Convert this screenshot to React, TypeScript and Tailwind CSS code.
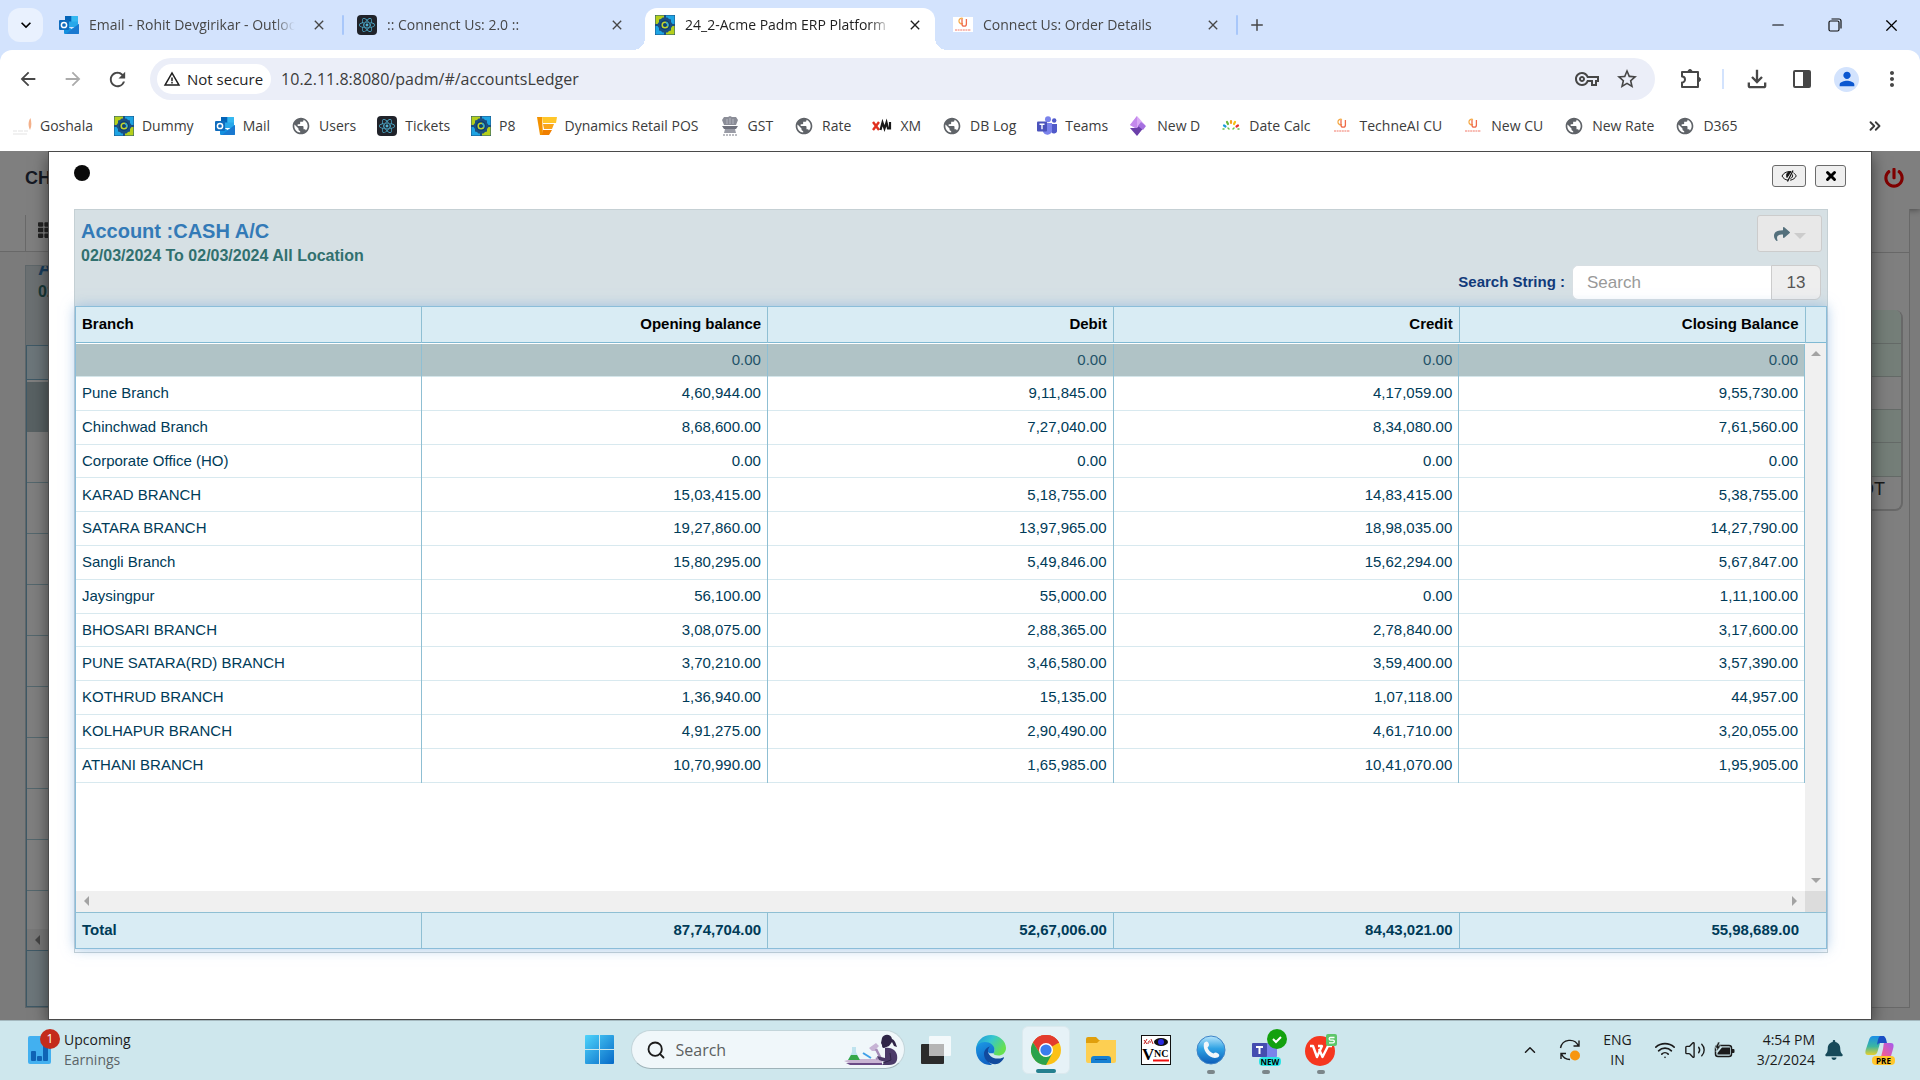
import React from 'react'
import { FaBell, FaPowerOff, FaReact, FaShare, FaTh } from 'react-icons/fa'
import {
  MdArrowBack,
  MdArrowForward,
  MdClose,
  MdKeyboardArrowDown,
  MdMoreVert,
  MdOutlineFileDownload,
  MdOutlineStarBorder,
  MdOutlineVpnKey,
  MdPerson,
  MdPublic,
  MdRefresh,
  MdWarningAmber
} from 'react-icons/md'
import { ChevronUp, ChevronsRight, Minus, Plus, Search, Volume2, Wifi, X } from 'lucide-react'

interface LedgerRow {
  branch: string
  opening: string
  debit: string
  credit: string
  closing: string
}

interface IconItem {
  title: string
  icon: React.ReactNode
}

const rows: LedgerRow[] = [
  { branch: '', opening: '0.00', debit: '0.00', credit: '0.00', closing: '0.00' },
  { branch: 'Pune Branch', opening: '4,60,944.00', debit: '9,11,845.00', credit: '4,17,059.00', closing: '9,55,730.00' },
  { branch: 'Chinchwad Branch', opening: '8,68,600.00', debit: '7,27,040.00', credit: '8,34,080.00', closing: '7,61,560.00' },
  { branch: 'Corporate Office (HO)', opening: '0.00', debit: '0.00', credit: '0.00', closing: '0.00' },
  { branch: 'KARAD BRANCH', opening: '15,03,415.00', debit: '5,18,755.00', credit: '14,83,415.00', closing: '5,38,755.00' },
  { branch: 'SATARA BRANCH', opening: '19,27,860.00', debit: '13,97,965.00', credit: '18,98,035.00', closing: '14,27,790.00' },
  { branch: 'Sangli Branch', opening: '15,80,295.00', debit: '5,49,846.00', credit: '15,62,294.00', closing: '5,67,847.00' },
  { branch: 'Jaysingpur', opening: '56,100.00', debit: '55,000.00', credit: '0.00', closing: '1,11,100.00' },
  { branch: 'BHOSARI BRANCH', opening: '3,08,075.00', debit: '2,88,365.00', credit: '2,78,840.00', closing: '3,17,600.00' },
  { branch: 'PUNE SATARA(RD) BRANCH', opening: '3,70,210.00', debit: '3,46,580.00', credit: '3,59,400.00', closing: '3,57,390.00' },
  { branch: 'KOTHRUD BRANCH', opening: '1,36,940.00', debit: '15,135.00', credit: '1,07,118.00', closing: '44,957.00' },
  { branch: 'KOLHAPUR BRANCH', opening: '4,91,275.00', debit: '2,90,490.00', credit: '4,61,710.00', closing: '3,20,055.00' },
  { branch: 'ATHANI BRANCH', opening: '10,70,990.00', debit: '1,65,985.00', credit: '10,41,070.00', closing: '1,95,905.00' }
]

/* ---------- favicons ---------- */

const OutlookIcon = () => (
  <svg viewBox="0 0 20 20" className="w-5 h-5">
    <rect x="6" y="1" width="13" height="11" rx="1" fill="#28a8ea" />
    <path d="M6 1h6.500v5.500H6z" fill="#0364b8" />
    <path d="M12.500 1H18a1 1 0 0 1 1 1v4.500h-6.500z" fill="#35b8f1" />
    <path d="M5 9l7.500 5L20 9v9a1 1 0 0 1-1 1H6a1 1 0 0 1-1-1z" fill="#1490df" />
    <path d="M20 9v9a1 1 0 0 1-1 1H7z" fill="#1a79d0" />
    <rect x="0" y="5" width="10" height="10" rx="1" fill="#0f6cbd" />
    <circle cx="5" cy="10" r="2.600" fill="none" stroke="#fff" strokeWidth="1.500" />
  </svg>
)

const ReactTile = () => (
  <span className="w-5 h-5 rounded-sm bg-[#20232a] flex items-center justify-center">
    <FaReact className="w-4 h-4 text-[#4fb3d4]" />
  </span>
)

const PadmIcon = () => (
  <svg viewBox="0 0 20 20" className="w-5 h-5">
    <rect width="20" height="20" fill="#1b4f80" />
    <path d="M.500 .5H9v2H7.500L6 4 4 4.500V7L2.500 9h-2z" fill="#b5cf1b" />
    <path d="M11 .5h8.500V9h-2L16 7V4.500L14 4l-1.500-1.500H11z" fill="#1ea4e3" />
    <path d="M.500 11h2L4 13v2.500l2 .5 1.500 1.500H9v2H.5z" fill="#1ea4e3" />
    <path d="M19.500 11h-2L16 13v2.500l-2 .5-1.500 1.500H11v2h8.500z" fill="#b5cf1b" />
    <circle cx="10" cy="10" r="5" fill="#0d3f74" />
    <circle cx="10" cy="10" r="2.800" fill="#0d3f74" stroke="#c3d52b" strokeWidth="1.500" />
    <path d="M11 7.400a2.800 2.800 0 0 1 1.500 4" stroke="#29abe2" strokeWidth="1.500" fill="none" />
  </svg>
)

const ConnectUsIcon = () => (
  <svg viewBox="0 0 20 20" className="w-5 h-5">
    <rect y="2" width="20" height="15" fill="#fff" />
    <path d="M10 3.500a2.800 2.800 0 1 0 0 5" fill="none" stroke="#f5a742" strokeWidth="1.200" />
    <path d="M9 4v5a2.200 2.200 0 0 0 4.400 0V4" fill="none" stroke="#ef6a4a" strokeWidth="1.300" />
    <path d="M2 15h16" stroke="#f6a59a" strokeWidth="1.500" strokeDasharray="2 .6" />
  </svg>
)

const GoshalaIcon = () => (
  <svg viewBox="0 0 20 20" className="w-5 h-5">
    <path d="M18.500 2c-3 4-2 9-.5 12 2-4 1.500-8 .5-12z" fill="#f3b08a" />
    <path d="M1 15h4m1 0h5m1 0h4M1 18h14" stroke="#f1f1f1" strokeWidth="2" />
  </svg>
)

const DynamicsIcon = () => (
  <svg viewBox="0 0 20 20" className="w-5 h-5">
    <path d="M0 1h5l1 18H3z" fill="#f39200" />
    <path d="M5 1h15l-1 6H6z" fill="#ffc629" />
    <path d="M6 8h11l-2 5H7z" fill="#f9a51a" />
    <path d="M6 14h9l-3 5H5z" fill="#f07f00" />
  </svg>
)

const EmblemIcon = () => (
  <svg viewBox="0 0 20 20" className="w-5 h-5">
    <path d="M4 1h4l2-1 2 1h4l2 3-2 5H4L2 4z" fill="#8b8d97" />
    <path d="M7 3v5M10 2v6M13 3v5" stroke="#b4b6c0" />
    <path d="M2 10h16l-2 3H4z" fill="#6f717c" />
    <path d="M5 13h10l1 4H4z" fill="#9a9ca6" />
    <path d="M3 19h14" stroke="#a5a7ae" strokeWidth="1.500" strokeDasharray="2 1" />
  </svg>
)

const GlobeIcon = () => <MdPublic className="w-5 h-5 text-[#5f6368]" />

const XmIcon = () => (
  <svg viewBox="0 0 20 20" className="w-5 h-5">
    <path d="M1 6l6 8M7 6l-6 8" stroke="#e0301e" strokeWidth="2.400" />
    <path d="M8.500 14l2-7.500 2 6 2-6 1.500 6h2V6" stroke="#1a1a1a" strokeWidth="2.200" fill="none" />
  </svg>
)

const TeamsIcon = () => (
  <svg viewBox="0 0 20 20" className="w-5 h-5">
    <circle cx="11" cy="3.200" r="3" fill="#7b83eb" />
    <circle cx="17.200" cy="4.500" r="2.200" fill="#5059c9" />
    <path d="M14 8h6v6a3 3 0 0 1-6 1z" fill="#5059c9" />
    <path d="M6 7h9v8a4.800 4.800 0 0 1-9 1z" fill="#7b83eb" />
    <rect y="5.500" width="10" height="10" rx="1" fill="#4b53bc" />
    <path d="M2.500 8.200h5M5 8.200v5" stroke="#fff" strokeWidth="1.400" />
  </svg>
)

const DiamondIcon = () => (
  <svg viewBox="0 0 20 20" className="w-5 h-5">
    <path d="M8 0l8 9-8 4-7-4z" fill="#d8a8f5" />
    <path d="M1 9l7-9v13z" fill="#c389ec" />
    <path d="M1 12l7 8 8-10-4-3-4 5z" fill="#6b3fa9" />
    <path d="M12 6l5 4-3 4-5-4z" fill="#a56fe0" />
  </svg>
)

const SparkIcon = () => (
  <svg viewBox="0 0 20 20" className="w-5 h-5" strokeWidth="2.200" strokeLinecap="round">
    <path d="M10 5v2" stroke="#f4a020" />
    <path d="M6 6l1 2" stroke="#69b539" />
    <path d="M14 6l-1 2" stroke="#f5c211" />
    <path d="M3 9.500l1.500 1" stroke="#1b9dd9" />
    <path d="M17 9.500l-1.500 1" stroke="#e5322d" />
    <path d="M2 13h1M7 12l1 1M12 13l1-1M17 13h1" stroke="#6ac04a" strokeWidth="1.500" />
  </svg>
)

const tabs = [
  { title: 'Email - Rohit Devgirikar - Outlook', icon: <OutlookIcon />, active: false, divider: true },
  { title: ':: Connenct Us: 2.0 ::', icon: <ReactTile />, active: false, divider: false },
  { title: '24_2-Acme Padm ERP Platform', icon: <PadmIcon />, active: true, divider: false },
  { title: 'Connect Us: Order Details', icon: <ConnectUsIcon />, active: false, divider: true }
]

const bookmarks: IconItem[] = [
  { title: 'Goshala', icon: <GoshalaIcon /> },
  { title: 'Dummy', icon: <PadmIcon /> },
  { title: 'Mail', icon: <OutlookIcon /> },
  { title: 'Users', icon: <GlobeIcon /> },
  { title: 'Tickets', icon: <ReactTile /> },
  { title: 'P8', icon: <PadmIcon /> },
  { title: 'Dynamics Retail POS', icon: <DynamicsIcon /> },
  { title: 'GST', icon: <EmblemIcon /> },
  { title: 'Rate', icon: <GlobeIcon /> },
  { title: 'XM', icon: <XmIcon /> },
  { title: 'DB Log', icon: <GlobeIcon /> },
  { title: 'Teams', icon: <TeamsIcon /> },
  { title: 'New D', icon: <DiamondIcon /> },
  { title: 'Date Calc', icon: <SparkIcon /> },
  { title: 'TechneAI CU', icon: <ConnectUsIcon /> },
  { title: 'New CU', icon: <ConnectUsIcon /> },
  { title: 'New Rate', icon: <GlobeIcon /> },
  { title: 'D365', icon: <GlobeIcon /> }
]

/* ---------- browser chrome ---------- */

function TabStrip() {
  return (
    <div className="h-[50px] bg-[#d3e3fd] flex items-center">
      <button aria-label="Search tabs" className="ml-2 w-[35px] h-[34px] rounded-xl bg-[#e9f1fe] flex items-center justify-center">
        <MdKeyboardArrowDown className="w-5 h-5 text-black" />
      </button>
      <div className="ml-1.5 flex self-stretch pt-2">
        {tabs.map((tab) => (
          <React.Fragment key={tab.title}>
            <div
              className={
                tab.active
                  ? 'relative w-[290px] bg-white rounded-t-xl flex items-center px-2.5 pb-2 gap-2.5 text-[#1f1f1f]'
                  : 'relative w-[290px] flex items-center px-2.5 pb-2 gap-2.5 text-[#474747]'
              }
            >
              {tab.active && (
                <>
                  <span className="absolute bottom-0 -left-3 w-3 h-3 bg-[radial-gradient(circle_at_0_0,#d3e3fd_12px,#ffffff_12px)]" />
                  <span className="absolute bottom-0 -right-3 w-3 h-3 bg-[radial-gradient(circle_at_100%_0,#d3e3fd_12px,#ffffff_12px)]" />
                </>
              )}
              <span className="shrink-0">{tab.icon}</span>
              <span className="flex-1 overflow-hidden whitespace-nowrap text-sm [mask-image:linear-gradient(to_right,black_88%,transparent_98%)]">
                {tab.title}
              </span>
              <button aria-label={`Close ${tab.title}`} className="w-5 h-5 flex items-center justify-center">
                <MdClose className="w-4 h-4" />
              </button>
            </div>
            <div className="w-2 flex items-center justify-center pb-2">
              {tab.divider && <span className="w-0.5 h-5 rounded bg-[#a8c7fa]" />}
            </div>
          </React.Fragment>
        ))}
        <button aria-label="New tab" className="w-8 flex items-center justify-center pb-2">
          <Plus className="w-[18px] h-[18px] text-[#474747]" />
        </button>
      </div>
      <div className="ml-auto flex self-stretch">
        <button aria-label="Minimize" className="w-[57px] flex items-center justify-center">
          <Minus className="w-[18px] h-[18px]" strokeWidth={1.5} />
        </button>
        <button aria-label="Restore" className="w-[57px] flex items-center justify-center">
          <svg viewBox="0 0 14 14" className="w-3.5 h-3.5" fill="none" stroke="#111" strokeWidth="1.200">
            <rect x="1" y="3" width="10" height="10" rx="1.500" />
            <path d="M3.500 1H11a2 2 0 0 1 2 2v7.500" />
          </svg>
        </button>
        <button aria-label="Close window" className="w-[57px] flex items-center justify-center">
          <X className="w-[19px] h-[19px]" strokeWidth={1.5} />
        </button>
      </div>
    </div>
  )
}

function AddressBar() {
  return (
    <div className="h-[58px] flex items-center pl-[5px] pr-1.5 text-[#474747]">
      <button aria-label="Back" className="w-[45px] flex justify-center"><MdArrowBack className="w-[22px] h-[22px]" /></button>
      <button aria-label="Forward" className="w-[45px] flex justify-center text-[#ababab]"><MdArrowForward className="w-[22px] h-[22px]" /></button>
      <button aria-label="Reload" className="w-[45px] flex justify-center"><MdRefresh className="w-[23px] h-[23px]" /></button>
      <div className="ml-2.5 flex-1 h-[42px] rounded-full bg-[#ebeef8] flex items-center pl-[7px] pr-4">
        <button className="h-[30px] rounded-full bg-white pl-1.5 pr-2 flex items-center gap-1.5 text-[#1f1f1f] text-[15px] whitespace-nowrap">
          <MdWarningAmber className="w-[18px] h-[18px]" />
          Not secure
        </button>
        <input
          aria-label="Address"
          defaultValue="10.2.11.8:8080/padm/#/accountsLedger"
          className="flex-1 min-w-0 ml-2.5 bg-transparent outline-none text-base text-[#3c3c3c]"
        />
        <button aria-label="Passwords" className="w-10 flex justify-center"><MdOutlineVpnKey className="w-6 h-6" /></button>
        <button aria-label="Bookmark this page" className="ml-2 w-6 flex justify-center"><MdOutlineStarBorder className="w-6 h-6" /></button>
      </div>
      <button aria-label="Extensions" className="ml-3 w-[45px] flex justify-center">
        <svg viewBox="0 0 24 24" className="w-6 h-6" fill="none" stroke="#474747" strokeWidth="2" strokeLinejoin="round">
          <path d="M4 5h16v15H4v-4.500a3 3 0 0 0 0-6z" />
          <path d="M10 4.500a2 2 0 0 1 4 0zM20.500 10.500a2 2 0 0 1 0 4z" fill="#474747" strokeWidth="1" />
        </svg>
      </button>
      <span className="mx-2.5 w-0.5 h-5 bg-[#d3e3fd]" />
      <button aria-label="Downloads" className="w-[45px] flex justify-center"><MdOutlineFileDownload className="w-7 h-7" /></button>
      <button aria-label="Side panel" className="w-[45px] flex justify-center">
        <svg viewBox="0 0 20 20" className="w-5 h-5">
          <rect x="2" y="2" width="16" height="16" rx="1" fill="none" stroke="#474747" strokeWidth="2" />
          <path d="M11 2h7v16h-7z" fill="#474747" />
        </svg>
      </button>
      <button aria-label="Profile" className="w-[45px] flex justify-center">
        <span className="w-[25px] h-[25px] rounded-full bg-[#d3e3fd] flex items-center justify-center">
          <MdPerson className="w-[22px] h-[22px] text-[#0b57d0]" />
        </span>
      </button>
      <button aria-label="Menu" className="w-[45px] flex justify-center"><MdMoreVert className="w-6 h-6" /></button>
    </div>
  )
}

function BookmarksBar() {
  return (
    <nav className="h-9 mb-[7px] flex items-center pl-3 pr-9 text-sm text-[#3c3c3c]">
      <div className="flex items-center gap-[21px]">
        {bookmarks.map((item) => (
          <a key={item.title} href="#" className="flex items-center gap-2 whitespace-nowrap">
            {item.icon}
            {item.title}
          </a>
        ))}
      </div>
      <button aria-label="More bookmarks" className="ml-auto"><ChevronsRight className="w-[18px] h-[18px]" strokeWidth={2.5} /></button>
    </nav>
  )
}

/* ---------- page behind the dialog ---------- */

function BackgroundPage() {
  return (
    <div className="h-full flex flex-col bg-[#f6f6f6]" aria-hidden="true">
      <div className="h-[58px] shrink-0 bg-white shadow-[0_1px_6px_rgba(0,0,0,0.4)] flex items-center justify-between pl-[25px] pr-4 pb-1">
        <span className="text-lg font-bold text-[#2b3245]">CH</span>
        <FaPowerOff className="w-5 h-5 text-[#ff0000]" />
      </div>
      <div className="flex-1 min-h-0 flex justify-between pb-3">
        <div className="w-[400px] flex flex-col">
          <div className="h-[43px] shrink-0 border-b border-[#d0d0d0] bg-white pt-1.5 pl-[25px]">
            <div className="h-full border-l border-[#d0d0d0] flex items-center pl-3 pb-1.5">
              <FaTh className="w-[18px] h-[18px] text-[#444444]" />
            </div>
          </div>
          <div className="mt-[13px] ml-[25px] flex-1 flex flex-col border border-[#bccdd3] bg-white">
            <div className="h-[79px] shrink-0 overflow-hidden bg-[#d6e0e4] pl-3">
              <p className="-mt-2.5 text-xl leading-6 font-bold text-[#337ab7]">A</p>
              <p className="text-base leading-6 font-bold text-[#31706f]">02</p>
            </div>
            <div className="flex-1 flex flex-col border border-[#7fb2cc]">
              <div className="h-[34px] bg-[#d9ecf4] border-b border-[#7fb2cc]" />
              <div className="mt-0.5 h-[50px] bg-[#b0c3c6]" />
              <div className="flex-1 min-h-0 overflow-hidden">
                {rows.slice(1, 10).map((row) => (
                  <div key={row.branch} className="h-[51px] border-b border-[#a9cfda]" />
                ))}
              </div>
              <div className="h-[21px] flex items-center bg-[#f0f0f0] pl-2">
                <span className="border-y-[5px] border-y-transparent border-r-[5px] border-r-[#888888]" />
                <span className="ml-2 w-20 h-full bg-[#c1c1c1]" />
              </div>
              <div className="h-[56px] bg-[#d9ecf4] border-t border-[#7fb2cc]" />
            </div>
          </div>
        </div>
        <div className="mr-2.5 w-[300px] border-r border-b border-[#d0d0d0] bg-white">
          <div className="h-11 border-b border-[#d0d0d0]" />
          <div className="mt-[57px] mr-1.5 rounded-lg border-r-2 border-b-2 border-[#d0d0d0] overflow-hidden">
            <div className="h-[34px] bg-[#e8fcf1] border-b border-[#c8d4ce]" />
            <div className="h-[33px] bg-[#e8fcf1] border-b border-[#c8d4ce]" />
            <div className="h-[33px] border-b border-[#c8d4ce]" />
            <div className="h-[33px] bg-[#e8fcf1] border-b border-[#c8d4ce]" />
            <div className="h-[34px] bg-[#e8fcf1] border-b border-[#c8d4ce]" />
            <div className="h-[32px] pr-4 text-right text-lg leading-6 text-[#333333]">DT</div>
          </div>
        </div>
      </div>
    </div>
  )
}

/* ---------- ledger dialog ---------- */

function LedgerTable() {
  return (
    <div className="relative flex-1 min-h-0 flex flex-col bg-white border border-[#8bbdd9] mb-[3px] text-[15px] text-[#003b58] shadow-[0_0_12px_rgba(120,170,220,0.6)]">
      <table className="w-full table-fixed bg-[#d9ecf4] text-black">
        <colgroup>
          <col /><col /><col /><col /><col /><col className="w-[21px]" />
        </colgroup>
        <thead>
          <tr className="h-[35px] border-b border-[#7fb9d3]">
            <th className="px-1.5 text-left border-r border-[#8fbfd3]">Branch</th>
            <th className="px-1.5 text-right border-r border-[#8fbfd3]">Opening balance</th>
            <th className="px-1.5 text-right border-r border-[#8fbfd3]">Debit</th>
            <th className="px-1.5 text-right border-r border-[#8fbfd3]">Credit</th>
            <th className="px-1.5 text-right border-r border-[#8fbfd3]">Closing Balance</th>
            <td />
          </tr>
        </thead>
      </table>

      <div className="flex-1 min-h-0 flex">
        <div className="flex-1 overflow-hidden pt-px">
          <table className="w-full h-[439px] table-fixed">
            <tbody>
              {rows.map((row, index) => (
                <tr key={row.branch} className={index === 0 ? 'border-b border-[#d5e6ea] bg-[#b0c3c6] text-[#1f5268]' : 'border-b border-[#d8e9ef]'}>
                  <td className="px-1.5 border-r border-[#8fbfd3]">{row.branch}</td>
                  <td className="px-1.5 text-right border-r border-[#8fbfd3]">{row.opening}</td>
                  <td className="px-1.5 text-right border-r border-[#8fbfd3]">{row.debit}</td>
                  <td className="px-1.5 text-right border-r border-[#8fbfd3]">{row.credit}</td>
                  <td className="px-1.5 text-right border-r border-[#8fbfd3]">{row.closing}</td>
                </tr>
              ))}
            </tbody>
          </table>
        </div>
        {/* vertical scrollbar */}
        <div className="w-[21px] bg-[#f0f0f0] flex flex-col items-center justify-between py-2">
          <span className="border-x-[5px] border-x-transparent border-b-[5px] border-b-[#a3a3a3]" />
          <span className="border-x-[5px] border-x-transparent border-t-[5px] border-t-[#a3a3a3]" />
        </div>
      </div>

      {/* horizontal scrollbar */}
      <div className="h-[21px] flex">
        <div className="flex-1 bg-[#f0f0f0] flex items-center justify-between px-2">
          <span className="border-y-[5px] border-y-transparent border-r-[5px] border-r-[#a3a3a3]" />
          <span className="border-y-[5px] border-y-transparent border-l-[5px] border-l-[#a3a3a3]" />
        </div>
        <div className="w-[21px] bg-[#dcdcdc]" />
      </div>

      <table className="w-full table-fixed bg-[#d9ecf4]">
        <colgroup>
          <col /><col /><col /><col /><col /><col className="w-[21px]" />
        </colgroup>
        <tbody>
          <tr className="h-9 border-t border-[#8fbfd3] font-bold">
            <td className="px-1.5 border-r border-[#8fbfd3]">Total</td>
            <td className="px-1.5 text-right border-r border-[#8fbfd3]">87,74,704.00</td>
            <td className="px-1.5 text-right border-r border-[#8fbfd3]">52,67,006.00</td>
            <td className="px-1.5 text-right border-r border-[#8fbfd3]">84,43,021.00</td>
            <td className="px-1.5 text-right">55,98,689.00</td>
            <td />
          </tr>
        </tbody>
      </table>
    </div>
  )
}

function LedgerDialog() {
  return (
    <div
      role="dialog"
      aria-label="Cash account ledger"
      className="absolute top-0 bottom-0 left-12 right-12 flex flex-col bg-white border border-[#4a4a4a] pl-[25px] pr-[43px] shadow-[0_5px_15px_rgba(0,0,0,0.5)]"
    >
      <div className="h-[57px] shrink-0 flex items-start justify-between pt-[13px] -mr-[18px]">
        <span className="w-4 h-4 rounded-full bg-[#0a0a0a]" />
        <div className="flex gap-[9px]">
          <button aria-label="Hide" className="w-[34px] h-[22px] rounded-[3px] border border-[#6b6b6b] bg-[#efefef] flex items-center justify-center">
            <svg viewBox="0 0 16 12" className="w-4 h-3" fill="none" stroke="#111" strokeWidth="1">
              <path d="M7 10.200C4 9.900 2 8 1 6c1.500-2.800 4-4.300 7-4.300" />
              <path d="M8 1.700C6 2.500 5 5 6 7.500L10 1.500z" fill="#111" />
              <path d="M12 .5L6.500 11.500" strokeWidth="1.300" />
              <path d="M12.500 2.800C14 3.800 14.800 5 15.200 6c-1 2-3 3.800-6 4.200" />
              <path d="M11.500 4.500c.5 2-.5 3.500-2 4" />
            </svg>
          </button>
          <button aria-label="Close" className="w-[31px] h-[22px] rounded-[3px] border border-[#6b6b6b] bg-[#efefef] flex items-center justify-center">
            <X className="w-3.5 h-3.5 text-black" strokeWidth={5} />
          </button>
        </div>
      </div>

      <div className="flex-1 min-h-0 mb-[66px] flex flex-col border border-[#c5d0d4] bg-[#f7fafc]">
        <div className="h-24 shrink-0 bg-[#d6e0e4] flex justify-between pl-1.5 pr-[5px] pt-[5px]">
          <div className="pt-1">
            <h1 className="text-xl leading-6 font-bold text-[#337ab7]">Account :CASH A/C</h1>
            <p className="text-base leading-[26px] font-bold text-[#31706f]">02/03/2024 To 02/03/2024 All Location</p>
          </div>
          <div className="flex flex-col items-end">
            <button aria-label="Share" className="w-[65px] h-[37px] rounded-[3px] border border-[#cccccc] bg-[#e8e8e8] flex items-center justify-center gap-1">
              <FaShare className="w-4 h-4 text-[#54707c]" />
              <span className="mt-1 border-x-[6px] border-x-transparent border-t-[6px] border-t-[#cccccc]" />
            </button>
            <div className="mt-[13px] mr-px flex items-center">
              <label htmlFor="ledger-search" className="mr-[7px] font-bold text-[15px] text-[#113a7a]">Search String :</label>
              <input
                id="ledger-search"
                type="text"
                placeholder="Search"
                className="w-[199px] h-[35px] rounded-l-md border border-r-0 border-[#d8dfe3] bg-white pl-[14px] text-[17px] outline-none placeholder:text-[#999999]"
              />
              <span className="w-[50px] h-[35px] rounded-r-md border border-[#cccccc] bg-[#eeeeee] flex items-center justify-center text-[17px] text-[#555555]">13</span>
            </div>
          </div>
        </div>
        <LedgerTable />
      </div>
    </div>
  )
}

/* ---------- taskbar ---------- */

const StartIcon = () => (
  <svg viewBox="0 0 29 29" className="w-[29px] h-[29px]">
    <defs>
      <linearGradient id="win" x1="0" y1="0" x2="1" y2="1">
        <stop offset="0" stopColor="#4fd4fb" />
        <stop offset="1" stopColor="#0669c7" />
      </linearGradient>
    </defs>
    <path d="M1 0h13v14H0V1a1 1 0 0 1 1-1zM15 0h13a1 1 0 0 1 1 1v13H15zM0 15h14v14H1a1 1 0 0 1-1-1zM15 15h14v13a1 1 0 0 1-1 1H15z" fill="url(#win)" />
  </svg>
)

const ScientistArt = () => (
  <svg viewBox="0 0 54 31" className="w-[54px] h-[31px]">
    <path d="M0 27l8-2h30v4H5z" fill="#c9b5d3" />
    <path d="M2 29h36v2H6z" fill="#6a4a86" />
    <path d="M8 13h4v5l4 8H4l4-8z" fill="#bfe3ee" />
    <path d="M7 21h6l3 5H4z" fill="#36a84a" />
    <path d="M19 19l8 5" stroke="#3fa0e8" strokeWidth="2" />
    <path d="M25 14l7-5 3 3-3 3 1 2h-5z" fill="#c7b4d5" />
    <path d="M32 15l4 8-4 2" stroke="#a58cb8" strokeWidth="2.500" fill="none" />
    <path d="M38 4c1-4 9-5 10 1 3 1 4 5 5 8l-3-1-2-4-3 4-5 2c-2 0-2-2-2-3l-1-2z" fill="#2f2547" />
    <path d="M41 14c6-1 11 2 12 7 1 6-1 10-8 10h-7l3-3-6-2-2-4 8 2z" fill="#4a3a68" />
    <path d="M46 19l1 7-8 3" stroke="#2f2547" fill="none" />
  </svg>
)

const TaskViewIcon = () => (
  <svg viewBox="0 0 30 28" className="w-[30px] h-7">
    <rect y="8" width="23" height="20" rx="1" fill="#2b2b2b" />
    <rect x="8" width="22" height="20" rx="1" fill="#ffffff" fillOpacity=".75" />
    <path d="M8 8h15v12H8z" fill="#b5b5b5" />
  </svg>
)

const EdgeIcon = () => (
  <svg viewBox="0 0 30 30" className="w-[30px] h-[30px]">
    <defs>
      <linearGradient id="edgeTop" x1="0" y1="0" x2="1" y2=".5">
        <stop offset="0" stopColor="#1b93dc" />
        <stop offset=".5" stopColor="#36c6cf" />
        <stop offset="1" stopColor="#66e04e" />
      </linearGradient>
      <linearGradient id="edgeBody" x1="0" y1="0" x2=".4" y2="1">
        <stop offset="0" stopColor="#1c9be6" />
        <stop offset="1" stopColor="#0f62c4" />
      </linearGradient>
    </defs>
    <path d="M0 15C0 6 7 0 15 0s15 6 15 13c0 5-4 7.500-7.500 7.500-3 0-5-1-5-2.300 0-.8 1-1 1-3.200 0-2-1.800-4-4-4C8 11 3 14 0 15z" fill="url(#edgeTop)" />
    <path d="M0 15c0-5 4-8 9-8 5 0 9.500 3.500 9.500 8 0 2.200-1 2.500-1 3.200H13c-1-1-1.500-2-1-4-4 3-3 10 4 15.700C7 31 0 24 0 15z" fill="url(#edgeBody)" />
    <path d="M14.500 11.200C11 12 8 15 8 19c0 7 7 11 13 10 3-.8 5.500-3 7-6 .2-.7-.3-.9-.8-.6C19 26 12 21 12 16c0-2 1-4 2.500-4.800z" fill="#114a9e" />
  </svg>
)

const ChromeIcon = () => (
  <svg viewBox="0 0 30 30" className="w-[30px] h-[30px]">
    <circle cx="15" cy="15" r="15" fill="#fbc116" />
    <path d="M15 15L2 7.500A15 15 0 0 1 28 7.500z" fill="#e33b2e" />
    <path d="M15 8h13.200A15 15 0 0 0 2 7.500L9 18.500z" fill="#e33b2e" />
    <path d="M2 7.500A15 15 0 0 0 15 30l6.200-11.500L15 22a7 7 0 0 1-6-3.500z" fill="#2ba24c" />
    <circle cx="15" cy="15" r="7" fill="#fff" />
    <circle cx="15" cy="15" r="5.600" fill="#3b7ded" />
  </svg>
)

const FolderIcon = () => (
  <svg viewBox="0 0 30 26" className="w-[30px] h-[26px]">
    <path d="M0 2a2 2 0 0 1 2-2h8l3 3h15a2 2 0 0 1 2 2v4H0z" fill="#e09f0c" />
    <path d="M0 6h11l3-3h16v21a2 2 0 0 1-2 2H2a2 2 0 0 1-2-2z" fill="#fdcf52" />
    <path d="M5 26v-4a3 3 0 0 1 3-3h14a3 3 0 0 1 3 3v4z" fill="#1680d2" />
    <path d="M9 22.500h12" stroke="#0b55a0" />
  </svg>
)

const VncIcon = () => (
  <svg viewBox="0 0 30 30" className="w-[30px] h-[30px]">
    <rect x=".5" y=".5" width="29" height="29" fill="#fff" stroke="#111" />
    <path d="M3 5l3 4M6 4l-3 5M7 9c0-4 3-4 2-1M10 4l2 5" stroke="#c02020" fill="none" />
    <ellipse cx="20" cy="7" rx="7" ry="4" fill="#111" />
    <circle cx="20" cy="7" r="3" fill="#2a2ae0" />
    <text x="1" y="25" fontFamily="Liberation Serif, serif" fontWeight="700" fontSize="17">V</text>
    <text x="13" y="22" fontFamily="Liberation Serif, serif" fontWeight="700" fontSize="10">NC</text>
    <path d="M12 25.500h16" stroke="#f01010" strokeWidth="2" />
  </svg>
)

const PhoneIcon = () => (
  <svg viewBox="0 0 30 30" className="w-[30px] h-[30px]">
    <defs>
      <linearGradient id="phone" x1="0" y1="0" x2="0" y2="1">
        <stop offset="0" stopColor="#b9e6fb" />
        <stop offset=".45" stopColor="#2fa2e4" />
        <stop offset="1" stopColor="#0c5cb8" />
      </linearGradient>
    </defs>
    <circle cx="15" cy="15" r="14" fill="url(#phone)" stroke="#3d83c8" />
    <path d="M8 8c1.500-2 3.500-2 4.500 0s.5 3-1 4.500c1 3 3 5 6 6 1.500-1.500 2.500-1.500 4.500 0s1.500 3-.5 4C14 25 6 16 8 8z" fill="#f1f6fa" />
  </svg>
)

const TeamsNewIcon = () => (
  <span className="relative w-[30px] h-[30px] flex items-center">
    <svg viewBox="0 0 30 30" className="w-[30px] h-[30px]">
      <rect x="14" y="8" width="12" height="15" rx="2" fill="#7b83eb" />
      <rect x="1" y="8" width="15" height="14" rx="1" fill="#454db0" />
      <path d="M5 12h7M8.500 12v7" stroke="#fff" strokeWidth="2" />
    </svg>
    <span className="absolute -top-1.5 -right-1.5 w-5 h-5 rounded-full bg-[#13a10e] flex items-center justify-center">
      <svg viewBox="0 0 12 12" className="w-3 h-3" fill="none" stroke="#fff" strokeWidth="2">
        <path d="M2 6l3 3 5-5" />
      </svg>
    </span>
    <span className="absolute -bottom-px left-2 h-[9px] px-0.5 rounded-sm bg-[#2be5e5] text-[8px] leading-[9px] font-bold text-black">NEW</span>
  </span>
)

const WpsIcon = () => (
  <svg viewBox="0 0 32 32" className="w-8 h-8">
    <circle cx="15" cy="17" r="15" fill="#f5371f" />
    <path d="M5 12h3l4 11 5-11h-4M14 15l3.500 8L23 12h4" stroke="#fff" strokeWidth="2.400" fill="none" strokeLinejoin="round" />
    <rect x="21" y="0" width="11" height="12" rx="2" fill="#5dc66a" />
    <path d="M29.500 3.500h-4a1.200 1.200 0 0 0 0 2.700h2.500a1.200 1.200 0 0 1 0 2.700h-4" stroke="#fff" fill="none" strokeWidth="1.300" />
  </svg>
)

const taskApps = [
  { title: 'Task view', icon: <TaskViewIcon />, open: false, active: false },
  { title: 'Edge', icon: <EdgeIcon />, open: false, active: false },
  { title: 'Chrome', icon: <ChromeIcon />, open: false, active: true },
  { title: 'File Explorer', icon: <FolderIcon />, open: false, active: false },
  { title: 'VNC Viewer', icon: <VncIcon />, open: false, active: false },
  { title: 'Phone', icon: <PhoneIcon />, open: true, active: false },
  { title: 'Teams', icon: <TeamsNewIcon />, open: true, active: false },
  { title: 'WPS Office', icon: <WpsIcon />, open: true, active: false }
]

function Taskbar() {
  return (
    <footer className="h-[60px] shrink-0 border-t border-[#a5b9bf] bg-[#cee7ed] pb-0.5 grid grid-cols-[1fr_auto_1fr] items-center text-sm text-[#1b1b1b]">
      <button className="flex items-center gap-3 pl-7 text-left leading-5">
        <span className="relative">
          <svg viewBox="0 0 24 28" className="w-6 h-7">
            <rect width="23" height="28" rx="2" fill="#42b0f0" />
            <rect x="3" y="15" width="5" height="10" rx="1" fill="#0f63b5" />
            <rect x="9" y="20" width="5" height="5" rx="1" fill="#0f63b5" />
            <rect x="15" y="9" width="5" height="16" rx="1" fill="#0f63b5" />
          </svg>
          <span className="absolute -top-[7px] -right-2 w-5 h-5 rounded-full bg-[#c42b1c] text-white text-xs leading-5 text-center">1</span>
        </span>
        <span>
          <span className="block">Upcoming</span>
          <span className="block text-[#5a6467]">Earnings</span>
        </span>
      </button>

      <div className="flex items-center gap-[7px]">
        <button aria-label="Start" className="w-12 h-12 flex items-center justify-center"><StartIcon /></button>
        <label className="w-[274px] h-[39px] rounded-full border border-[#c3d5da] border-b-[#9fb3b9] bg-[#f0f7fa] flex items-center pl-3.5 pr-1.5">
          <Search className="w-5 h-5 shrink-0" strokeWidth={2.2} />
          <input type="text" placeholder="Search" className="ml-2.5 flex-1 min-w-0 bg-transparent outline-none text-base placeholder:text-[#5c5f61]" />
          <ScientistArt />
        </label>
        {taskApps.map((app) => (
          <button
            key={app.title}
            aria-label={app.title}
            className={
              app.active
                ? 'relative w-12 h-12 rounded-md border border-[#dbe9ee] bg-[#e6f2f7] flex items-center justify-center'
                : 'relative w-12 h-12 flex items-center justify-center'
            }
          >
            {app.icon}
            {app.active && <span className="absolute bottom-0 w-5 h-1 rounded-full bg-[#24808f]" />}
            {app.open && <span className="absolute bottom-0 w-2 h-1 rounded-full bg-[#7b868a]" />}
          </button>
        ))}
      </div>

      <div className="flex items-center justify-end pr-[25px] leading-5">
        <button aria-label="Hidden icons" className="mr-5"><ChevronUp className="w-[18px] h-[18px]" /></button>
        <button aria-label="Updates" className="mr-[22px]">
          <svg viewBox="0 0 22 22" className="w-[22px] h-[22px]" fill="none" stroke="#1b1b1b" strokeWidth="1.400">
            <path d="M1.500 9A9.500 9.500 0 0 1 19.500 7M20 1.500V7h-5.500M2 20v-5.500h5M2.500 15A9.500 9.500 0 0 0 11 20.500" />
            <circle cx="16" cy="16.500" r="5" fill="#f7960f" stroke="none" />
          </svg>
        </button>
        <button className="text-center mr-[22px]">
          <span className="block">ENG</span>
          <span className="block">IN</span>
        </button>
        <button aria-label="Network, sound and battery" className="flex items-center gap-2 mr-[22px]">
          <Wifi className="w-[22px] h-[22px]" strokeWidth={1.8} />
          <Volume2 className="w-[22px] h-[22px]" strokeWidth={1.5} />
          <svg viewBox="0 0 21 16" className="w-[21px] h-4">
            <rect x="1.500" y="3.500" width="16" height="11" rx="2.500" fill="none" stroke="#1b1b1b" strokeWidth="1.500" />
            <path d="M8 5.500h8v7H3.500V11z" fill="#1b1b1b" />
            <path d="M18 7h1.500a1 1 0 0 1 1 1v2a1 1 0 0 1-1 1H18z" fill="#1b1b1b" />
            <path d="M4 0L1 6h2L2 10l5-6H4.500L6 0z" fill="#1b1b1b" stroke="#cee7ed" strokeWidth=".6" />
          </svg>
        </button>
        <button className="text-right mr-2.5">
          <span className="block">4:54 PM</span>
          <span className="block">3/2/2024</span>
        </button>
        <button aria-label="Notifications" className="mr-[22px]"><FaBell className="w-[18px] h-5 text-[#174a5a]" /></button>
        <button aria-label="Copilot" className="relative">
          <svg viewBox="0 0 30 28" className="w-[30px] h-7">
            <defs>
              <linearGradient id="copA" x1="0" y1="0" x2="0" y2="1">
                <stop offset="0" stopColor="#1b8fe8" />
                <stop offset=".55" stopColor="#3cb6a0" />
                <stop offset="1" stopColor="#e8d02c" />
              </linearGradient>
              <linearGradient id="copB" x1="1" y1="0" x2="0" y2="1">
                <stop offset="0" stopColor="#a45af0" />
                <stop offset=".6" stopColor="#ee5b9a" />
                <stop offset="1" stopColor="#f9903c" />
              </linearGradient>
            </defs>
            <path d="M8 0h12c-3 0-4 3-5 7l-2 7c-1 4-2 5-5 5H3c-3 0-3-3-2-6L4 4c.800-2.500 2-4 4-4z" fill="url(#copA)" />
            <path d="M15 0h3c2 0 3 2 4 7h-6c-2 0-3 .5-4 2 1-5 1-7 3-9z" fill="#1a4fc4" />
            <path d="M19 7h7c3 0 3 3 2 6l-2 7c-1 4-3 6-5 6h-9c3 0 3-2 4-5l2-8c.5-3 .5-5 1-6z" fill="url(#copB)" />
          </svg>
          <span className="absolute -bottom-px left-[7px] h-[9px] w-[23px] rounded-sm bg-[#ffc72c] text-[8px] leading-[9px] font-bold text-center text-black">PRE</span>
        </button>
      </div>
    </footer>
  )
}

export default function App() {
  return (
    <div className="h-screen flex flex-col overflow-hidden font-['Open_Sans',sans-serif]">
      <header className="shrink-0 bg-[#d3e3fd]">
        <TabStrip />
        <div className="bg-white rounded-t-xl overflow-hidden">
          <AddressBar />
          <BookmarksBar />
        </div>
      </header>

      <main className="relative flex-1 min-h-0 overflow-hidden font-['Liberation_Sans',Arial,sans-serif]">
        <BackgroundPage />
        <div className="absolute inset-0 bg-black/50" />
        <LedgerDialog />
      </main>

      <Taskbar />
    </div>
  )
}
